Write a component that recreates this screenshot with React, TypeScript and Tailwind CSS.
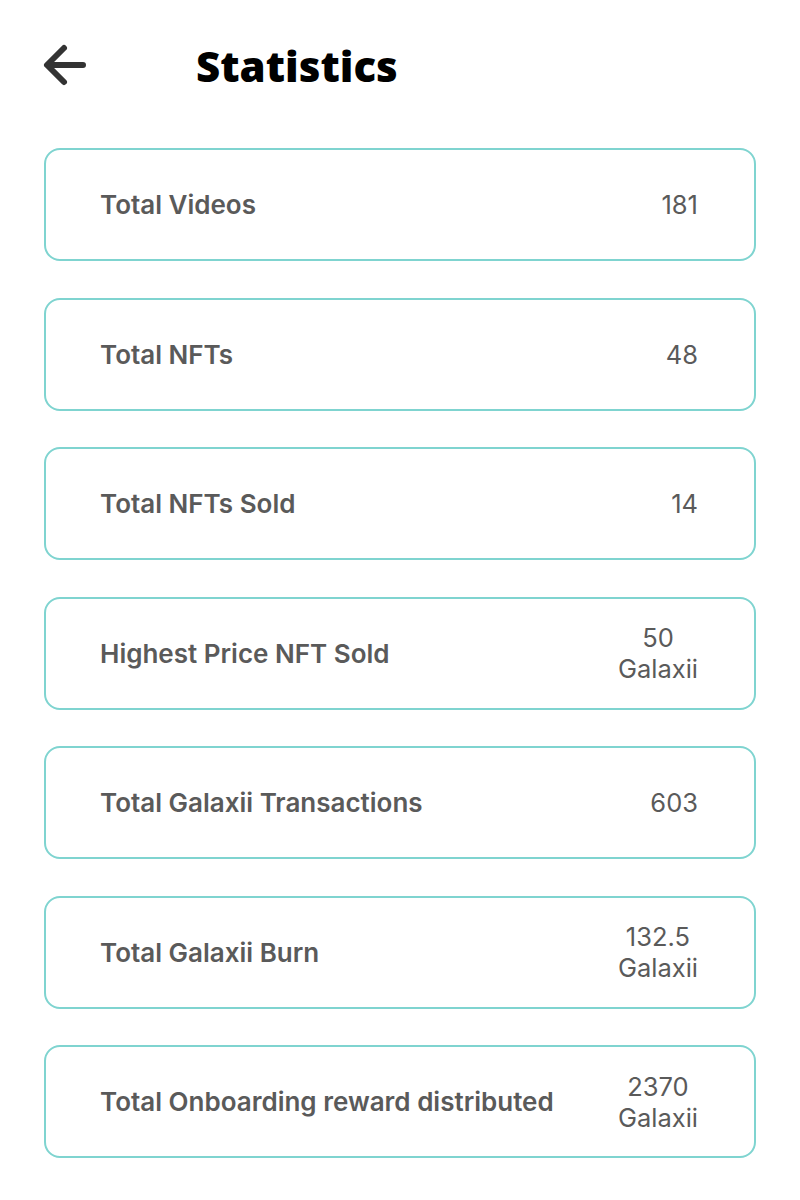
const stats = [
  { label: 'Total Videos', value: ['181'] },
  { label: 'Total NFTs', value: ['48'] },
  { label: 'Total NFTs Sold', value: ['14'] },
  { label: 'Highest Price NFT Sold', value: ['50', 'Galaxii'] },
  { label: 'Total Galaxii Transactions', value: ['603'] },
  { label: 'Total Galaxii Burn', value: ['132.5', 'Galaxii'] },
  { label: 'Total Onboarding reward distributed', value: ['2370', 'Galaxii'] },
];

function BackArrow() {
  return (
    <svg width="46" height="46" viewBox="0 0 46 46" fill="none">
      <path
        d="M41 23H6M22 6L5 23L22 40"
        stroke="#333333"
        strokeWidth="6"
        strokeLinecap="round"
        strokeLinejoin="round"
      />
    </svg>
  );
}

export default function App() {
  return (
    <div
      className="w-[800px] min-h-[1200px] bg-white"
      style={{ fontFamily: 'Inter, "Noto Sans", sans-serif' }}>
      <div className="flex items-center h-[130px] pl-[42px]">
        <BackArrow />
        <h1
          className="ml-[108px] text-[42px] font-extrabold text-black"
          style={{ fontFamily: '"Open Sans", Inter, sans-serif' }}>
          Statistics
        </h1>
      </div>
      <div className="flex flex-col gap-[36.5px] px-[44px] pt-[18px]">
        {stats.map(item => (
          <div
            key={item.label}
            className="flex items-center justify-between h-[113px] border-2 border-[#7fd4d0] rounded-[16px] pl-[54px] pr-[56px]">
            <p className="text-[26px] font-semibold text-[#5a5a5a]">
              {item.label}
            </p>
            <div className="flex flex-col items-center text-[25.5px] leading-[31px] text-[#5a5a5a]">
              {item.value.map(v => (
                <span key={v}>{v}</span>
              ))}
            </div>
          </div>
        ))}
      </div>
    </div>
  );
}
